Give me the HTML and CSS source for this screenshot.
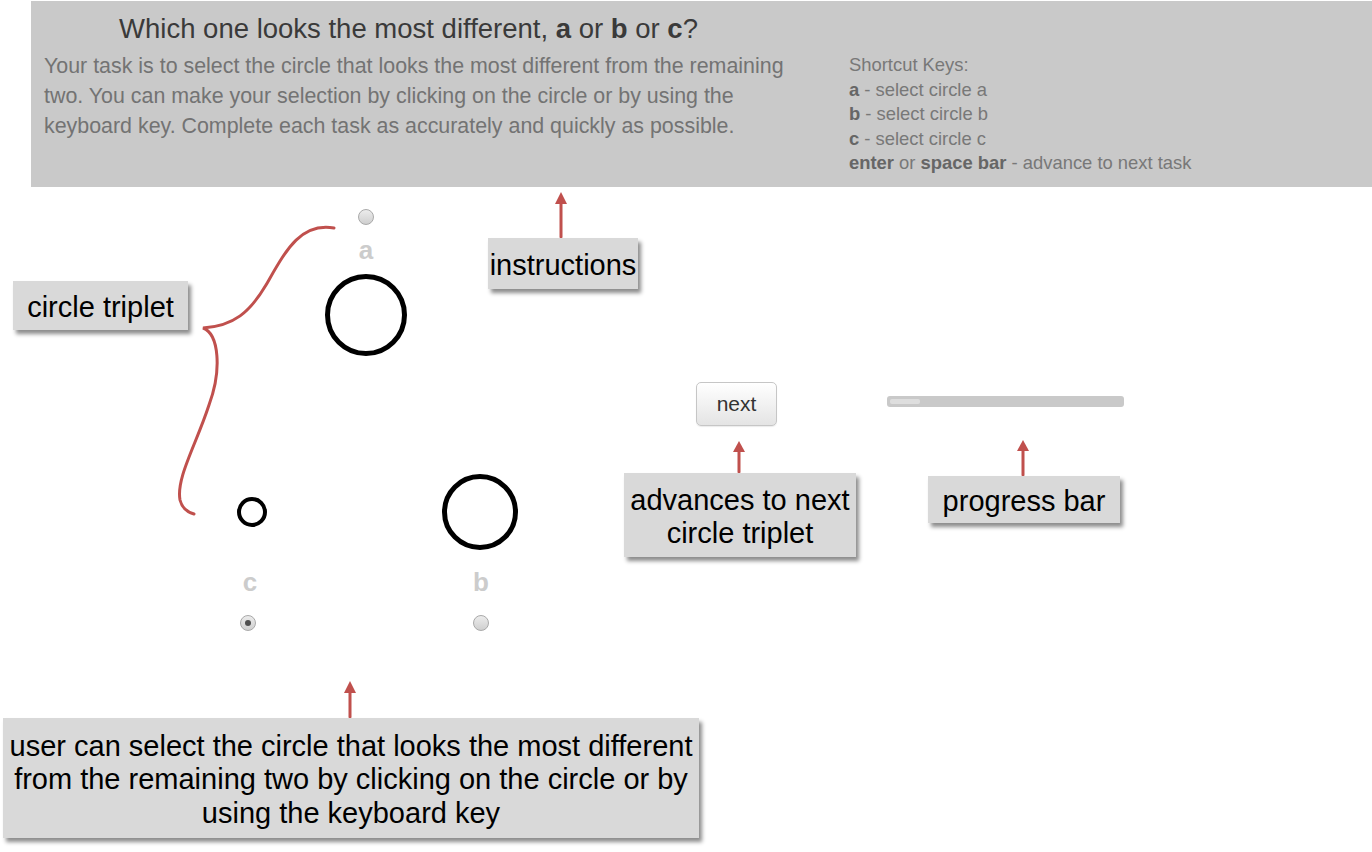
FILE: index.html
```html
<!DOCTYPE html>
<html lang="en">
<head>
    <meta charset="UTF-8">
    <meta name="viewport" content="width=device-width, initial-scale=1.0">
    <title>Circle Triplet Task</title>
    <link rel="stylesheet" href="styles.css">
</head>
<body>
    <div class="page">
        <div class="header">
            <div class="intro">
                <h1 class="title">Which one looks the most different, <b>a</b> or <b>b</b> or <b>c</b>?</h1>
                <p class="desc">Your task is to select the circle that looks the most different from the remaining two. You can make your selection by clicking on the circle or by using the keyboard key. Complete each task as accurately and quickly as possible.</p>
            </div>
            <div class="shortcuts">
                <div>Shortcut Keys:</div>
                <div><b>a</b> - select circle a</div>
                <div><b>b</b> - select circle b</div>
                <div><b>c</b> - select circle c</div>
                <div><b>enter</b> or <b>space bar</b> - advance to next task</div>
            </div>
        </div>

        <div class="stage">
            <div class="triplet">
                <div class="top-row">
                    <div class="item">
                        <span class="radio"></span>
                        <span class="letter">a</span>
                        <div class="slot"><span class="ring ring-a"></span></div>
                    </div>
                </div>
                <div class="bottom-row">
                    <div class="item">
                        <div class="slot"><span class="ring ring-c"></span></div>
                        <span class="letter">c</span>
                        <span class="radio checked"></span>
                    </div>
                    <div class="item">
                        <div class="slot"><span class="ring ring-b"></span></div>
                        <span class="letter">b</span>
                        <span class="radio"></span>
                    </div>
                </div>
            </div>

            <div class="controls">
                <button class="next-btn">next</button>
                <div class="progress"><div class="progress-fill"></div></div>
            </div>
        </div>

        <!-- annotation layer -->
        <svg class="marks" width="1372" height="852" viewBox="0 0 1372 852">
            <g fill="none" stroke="#c0504d" stroke-width="3" stroke-linecap="round">
                <path d="M334,228 C300,222 285,252 266,285 C250,312 234,326 203,328 C219,334 222,370 209,405 C196,445 176,478 180,500 C182,508 187,512 194,514"/>
                <line x1="561" y1="202" x2="561" y2="237"/>
                <line x1="739" y1="450" x2="739" y2="472"/>
                <line x1="1023" y1="449" x2="1023" y2="475"/>
                <line x1="350" y1="691" x2="350" y2="717"/>
            </g>
            <g fill="#c0504d">
                <polygon points="555,204 561,192 567,204"/>
                <polygon points="733,452 739,441 745,452"/>
                <polygon points="1017,451 1023,440 1029,451"/>
                <polygon points="344,693 350,681 356,693"/>
            </g>
        </svg>
        <div class="note note-instructions">instructions</div>
        <div class="note note-triplet">circle triplet</div>
        <div class="note note-next">advances to next<br>circle triplet</div>
        <div class="note note-progress">progress bar</div>
        <div class="note note-select">user can select the circle that looks the most different<br>from the remaining two by clicking on the circle or by<br>using the keyboard key</div>
    </div>
</body>
</html>
```

FILE: styles.css
```css
* {
    box-sizing: border-box;
    margin: 0;
    padding: 0;
}

body {
    font-family: "Liberation Sans", Arial, Helvetica, sans-serif;
    background-color: #ffffff;
    width: 1372px;
    height: 852px;
    overflow: hidden;
}

.page {
    position: relative;
    width: 1372px;
    height: 852px;
    padding-top: 1px;
}

/* header with instructions */
.header {
    margin-left: 31px;
    height: 186px;
    background-color: #c9c9c9;
    display: flex;
}

.intro {
    width: 768px;
    padding-left: 13px;
    padding-top: 12px;
}

.title {
    font-size: 27.5px;
    line-height: 32px;
    font-weight: normal;
    color: #3a3a3a;
    text-align: center;
    padding-right: 26px;
}

.title b {
    font-weight: bold;
}

.desc {
    margin-top: 6px;
    font-size: 21.4px;
    line-height: 30px;
    color: #737373;
}

.shortcuts {
    margin-left: 50px;
    padding-top: 52px;
    font-size: 18.4px;
    line-height: 24.5px;
    color: #787878;
}

.shortcuts b {
    color: #666666;
}

/* circles */
.stage {
    display: flex;
}

.triplet {
    width: 696px;
    flex: none;
}

.top-row {
    padding-left: 321px;
    padding-top: 22px;
}

.bottom-row {
    display: flex;
    gap: 141px;
    padding-left: 205px;
    margin-top: 115px;
}

.item {
    width: 90px;
    display: flex;
    flex-direction: column;
    align-items: center;
}

.radio {
    display: block;
    width: 16px;
    height: 16px;
    border-radius: 50%;
    border: 1px solid #a9a9a9;
    background: linear-gradient(#ececec, #cfcfcf);
    position: relative;
}

.radio.checked {
    margin-left: -4px;
}

.radio.checked::after {
    content: "";
    position: absolute;
    left: 4px;
    top: 4px;
    width: 6px;
    height: 6px;
    border-radius: 50%;
    background-color: #4f4f4f;
}

.letter {
    display: block;
    font-size: 26px;
    line-height: 30px;
    font-weight: bold;
    color: #cccccc;
}

.top-row .letter {
    margin-top: 10px;
    margin-bottom: 9px;
}

.bottom-row .letter {
    margin-top: 14px;
    margin-bottom: 18px;
}

.slot {
    width: 90px;
    height: 82px;
    display: flex;
    align-items: center;
    justify-content: center;
}

.ring {
    display: block;
    border-radius: 50%;
    border: 5px solid #000000;
}

.ring-a {
    width: 82px;
    height: 82px;
}

.ring-b {
    width: 76px;
    height: 76px;
    margin-left: -2px;
}

.ring-c {
    width: 30px;
    height: 30px;
    border-width: 4px;
    margin-left: 4px;
}

/* next button and progress */
.controls {
    display: flex;
    align-items: flex-start;
    margin-top: 195px;
    height: 44px;
}

.next-btn {
    width: 81px;
    height: 44px;
    font-family: "Liberation Sans", Arial, sans-serif;
    font-size: 21px;
    color: #333333;
    background: linear-gradient(#ffffff, #e4e4e4);
    border: 1px solid #c6c6c6;
    border-radius: 5px;
    box-shadow: 0 1px 1px rgba(0, 0, 0, 0.08);
    cursor: pointer;
}

.progress {
    margin-left: 110px;
    margin-top: 14px;
    width: 237px;
    height: 11px;
    padding: 3px;
    background-color: #c9c9c9;
    border-radius: 3px;
}

.progress-fill {
    width: 30px;
    height: 5px;
    background-color: #dedede;
    border-radius: 2px;
}

/* annotations */
.marks {
    position: absolute;
    left: 0;
    top: 0;
    pointer-events: none;
}

.note {
    position: absolute;
    background-color: #d9d9d9;
    box-shadow: 3px 4px 4px rgba(0, 0, 0, 0.45);
    font-size: 29px;
    line-height: 33px;
    color: #000000;
    text-align: center;
    display: flex;
    align-items: center;
    justify-content: center;
    white-space: nowrap;
    padding-top: 4px;
}

.note-instructions {
    left: 488px;
    top: 238px;
    width: 150px;
    height: 51px;
}

.note-triplet {
    left: 13px;
    top: 281px;
    width: 175px;
    height: 49px;
}

.note-next {
    left: 624px;
    top: 473px;
    width: 232px;
    height: 84px;
}

.note-progress {
    left: 928px;
    top: 476px;
    width: 192px;
    height: 47px;
}

.note-select {
    left: 3px;
    top: 718px;
    width: 696px;
    height: 120px;
    line-height: 33.5px;
}
```
